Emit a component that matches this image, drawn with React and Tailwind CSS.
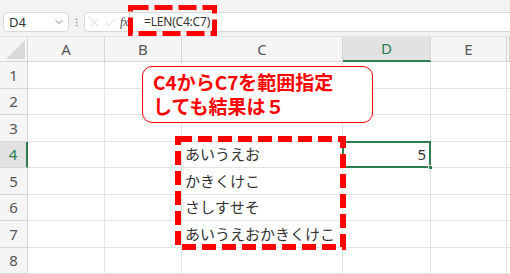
import React from 'react';
import { ChevronDown, X, Check, EllipsisVertical } from 'lucide-react';

const cols = ['A', 'B', 'C', 'D', 'E', ''];
const cellText = {
    4: 'あいうえお',
    5: 'かきくけこ',
    6: 'さしすせそ',
    7: 'あいうえおかきくけこ',
};

function DashedBox({ className, w, h, stroke, dash }) {
    return (
        <svg className={className} width={w} height={h} viewBox={`0 0 ${w} ${h}`}>
            <rect
                x={stroke / 2}
                y={stroke / 2}
                width={w - stroke}
                height={h - stroke}
                fill="none"
                stroke="#ff0000"
                strokeWidth={stroke}
                strokeDasharray={dash}
            />
        </svg>
    );
}

export default function App() {
    const rows = [1, 2, 3, 4, 5, 6, 7, 8];

    return (
        <div className="relative w-[510px] h-[274px] overflow-hidden bg-white font-['Noto_Sans','Noto_Sans_CJK_JP',sans-serif]">
            {/* formula bar */}
            <div className="h-[37px] bg-[#f3f3f3] border-b border-[#e4e4e4] flex items-start pt-[12px]">
                <div className="ml-[3px] w-[66px] h-[20px] bg-white border border-[#d9d9d9] rounded-[4px] flex items-center justify-between pl-[5px] pr-[3px]">
                    <span className="text-[13px] text-[#333] leading-none">D4</span>
                    <ChevronDown size={12} strokeWidth={1.5} className="text-[#555]" />
                </div>
                <div className="w-[15px] h-[20px] flex items-center justify-center">
                    <EllipsisVertical size={11} strokeWidth={2} className="text-[#999]" />
                </div>
                <div className="w-[46px] h-[20px] bg-white border border-[#d9d9d9] rounded-l-[4px] flex items-center gap-[3px] pl-[3px]">
                    <X size={13} strokeWidth={1.2} className="text-[#c4c4c4]" />
                    <Check size={13} strokeWidth={1.2} className="text-[#c4c4c4]" />
                    <span className="text-[12px] italic font-['Liberation_Serif',serif] text-[#444] leading-none">fx</span>
                </div>
                <div className="flex-1 h-[20px] bg-white border-y border-[#d9d9d9] flex items-center pl-[14px]">
                    <span className="text-[12px] text-[#333] leading-none tracking-[-0.2px]">=LEN(C4:C7)</span>
                </div>
            </div>

            {/* sheet grid */}
            <div className="grid grid-cols-[28px_77px_77px_161px_88px_76px_1fr] grid-rows-[25px_repeat(8,26.5px)]">
                <div className="relative bg-[#f5f5f5] border-r border-b border-[#d6d6d6]">
                    <div className="absolute right-[2px] bottom-[2px] w-[19px] h-[19px] bg-[#d9d9d9] [clip-path:polygon(100%_0,100%_100%,0_100%)]" />
                </div>
                {cols.map((c) =>
                    c === 'D' ? (
                        <div key={c} className="bg-[#e2e2e2] border-r border-[#d6d6d6] border-b-2 border-b-[#2e7d4f] flex items-center justify-center text-[15px] text-[#2e7d4f]">
                            {c}
                        </div>
                    ) : (
                        <div key={c || 'x'} className="bg-[#f5f5f5] border-r border-b border-[#d6d6d6] flex items-center justify-center text-[15px] text-[#555]">
                            {c}
                        </div>
                    )
                )}

                {rows.map((r) => (
                    <React.Fragment key={r}>
                        <div
                            className={
                                r === 4
                                    ? 'bg-[#e2e2e2] border-r-2 border-r-[#2e7d4f] border-b border-b-[#d6d6d6] flex items-center justify-center text-[15px] text-[#2e7d4f]'
                                    : 'bg-[#f5f5f5] border-r border-b border-[#d6d6d6] flex items-center justify-center text-[15px] text-[#555]'
                            }
                        >
                            {r}
                        </div>
                        <div className="border-r border-b border-[#e3e3e3]" />
                        <div className="border-r border-b border-[#e3e3e3]" />
                        <div className="border-r border-b border-[#e3e3e3] flex items-center pl-[3px] text-[15px] text-[#333] font-['Noto_Sans_CJK_JP',sans-serif] whitespace-nowrap">
                            {cellText[r] || ''}
                        </div>
                        {r === 4 ? (
                            <div className="relative border-r border-b border-[#e3e3e3] flex items-center justify-end pr-[4px] text-[15px] text-[#333]">
                                5
                                <div className="absolute -left-px -top-px -right-px -bottom-px border-2 border-[#2e7d4f]" />
                                <div className="absolute -right-[3px] -bottom-[3px] w-[5px] h-[5px] bg-[#2e7d4f] border border-white" />
                            </div>
                        ) : (
                            <div className="border-r border-b border-[#e3e3e3]" />
                        )}
                        <div className="border-r border-b border-[#e3e3e3]" />
                        <div className="border-b border-[#e3e3e3]" />
                    </React.Fragment>
                ))}
            </div>

            {/* annotations */}
            <DashedBox className="absolute left-[128px] top-[5px]" w={89} h={31} stroke={5} dash="18 6" />
            <DashedBox className="absolute left-[175px] top-[136px]" w={171} h={114} stroke={6} dash="14 6" />

            <div className="absolute left-[142px] top-[66px] w-[231px] h-[57px] bg-white border border-[#ff0000] rounded-[10px] pl-[10px] pt-[3px] text-[19px] leading-[24px] font-bold text-[#ff0000] font-['Noto_Sans_CJK_JP',sans-serif] whitespace-nowrap">
                <div>C4からC7を範囲指定</div>
                <div>しても結果は５</div>
            </div>
        </div>
    );
}
